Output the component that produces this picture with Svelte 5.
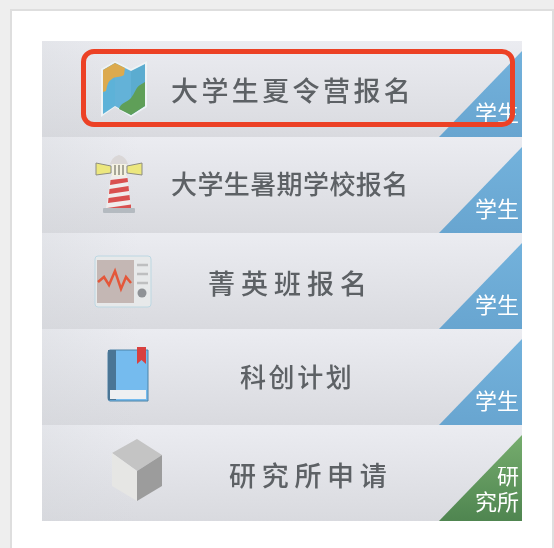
<script>
  const rows = [
    { id: 'map', label: '大学生夏令营报名', tag: ['学生'] },
    { id: 'tower', label: '大学生暑期学校报名', tag: ['学生'] },
    { id: 'monitor', label: '菁英班报名', tag: ['学生'] },
    { id: 'book', label: '科创计划', tag: ['学生'] },
    { id: 'cube', label: '研究所申请', tag: ['研', '究所'], green: true }
  ]
</script>

<div class="page">
  <div class="card">
    <div class="list">
      {#each rows as row}
        <div class="row {row.id}">
          <div class="icon">
            {#if row.id === 'map'}
              <svg width="50" height="58" viewBox="0 0 50 58">
                <path d="M2 9 L16 1 L32 9 L48 1 L48 47 L32 57 L16 47 L2 57Z" fill="#eef3f5" />
                <path d="M4 10 L16 3 L16 46 L4 54Z" fill="#5db2d8" />
                <path d="M16 3 L32 11 L32 55 L16 46Z" fill="#63b2d8" />
                <path d="M32 11 L46 4 L46 46 L32 55Z" fill="#5bacd0" />
                <path d="M4 10 L16 3 L26 8 L25 15 C20 18 16 16 13 19 C9 21 8 26 7 31 L4 32Z" fill="#dcaa4e" />
                <path d="M20 49 C22 42 28 43 32 38 C36 33 37 27 41 25 L46 22 L46 46 L32 55Z" fill="#5f9f58" />
              </svg>
            {:else if row.id === 'tower'}
              <svg width="48" height="60" viewBox="0 0 48 60">
                <path d="M1 8 L16 11 L16 18 L1 20Z" fill="#ece77e" stroke="#8d8d80" />
                <path d="M47 8 L32 11 L32 18 L47 20Z" fill="#ece77e" stroke="#8d8d80" />
                <path d="M15 9 C17 3 20 1 24 0 C28 1 31 3 33 9Z" fill="#dad7d7" />
                <rect x="17" y="9" width="14" height="12" fill="#f4f2e2" />
                <path d="M20 10 V20 M28 10 V20 M24 10 V20" stroke="#8f8f80" stroke-width="1.5" />
                <path d="M16 21 L32 21 L36 53 L11 53Z" fill="#f0ecec" />
                <path d="M15.500 25 L32.500 23 L33 27 L15 30Z M14.500 34 L33.500 31 L34 36 L14 39Z M13.500 43 L34.500 40 L35 45 L13 48Z M12 53 L36 49.500 L36 53Z" fill="#d9504f" />
                <rect x="8" y="53" width="32" height="5" rx="1" fill="#b4bac0" />
              </svg>
            {:else if row.id === 'monitor'}
              <svg width="58" height="53" viewBox="0 0 58 53">
                <rect x="1" y="1" width="56" height="51" rx="3" fill="#e7e9ea" stroke="#bcd7e2" />
                <rect x="3" y="5" width="37" height="43" fill="#c4b7b4" />
                <path d="M4 27 L10 22 L15 30 L21 16 L27 34 L32 22 L37 28" fill="none" stroke="#e4573a" stroke-width="2.5" />
                <path d="M43 10 H54 M43 19 H54 M43 28 H54" stroke="#bebfc0" stroke-width="2.5" />
                <circle cx="48" cy="38" r="4.500" fill="#8f9296" />
              </svg>
            {:else if row.id === 'book'}
              <svg width="42" height="56" viewBox="0 0 42 56">
                <path d="M3 4 H41 V55 H3 Q1 55 1 52 V7 Q1 4 3 4Z" fill="#75bbee" stroke="#4d83a8" />
                <rect x="1" y="4" width="8" height="50" fill="#4a7595" />
                <rect x="3" y="44" width="36" height="9" fill="#eef0f2" />
                <path d="M30 1 H39 V18 L34.500 14 L30 18Z" fill="#d8403f" />
              </svg>
            {:else}
              <svg width="52" height="64" viewBox="0 0 52 64">
                <path d="M26 1 L51 17 L26 33 L1 15Z" fill="#c4c4c4" />
                <path d="M1 15 L26 33 L26 63 L1 48Z" fill="#e6e6e4" />
                <path d="M51 17 L26 33 L26 63 L51 48Z" fill="#9c9c9c" />
              </svg>
            {/if}
          </div>
          <span class="label">{row.label}</span>
          <div class="corner" class:green={row.green}></div>
          <div class="tag">
            {#each row.tag as line}
              <div>{line}</div>
            {/each}
          </div>
        </div>
      {/each}
      <div class="highlight"></div>
    </div>
  </div>
</div>

<style>
  :global(body) {
    background: #eeeeee;
  }
  .page {
    height: 548px;
    overflow: hidden;
    padding: 9px 0 0 10px;
    box-sizing: border-box;
    background: #eeeeee;
  }
  .card {
    width: 544px;
    height: 560px;
    box-sizing: border-box;
    border: 2px solid #dedede;
    background: #ffffff;
    padding: 30px 0 0 30px;
  }
  .list {
    position: relative;
    width: 480px;
    display: flex;
    flex-direction: column;
  }
  .row {
    position: relative;
    height: 96px;
    display: flex;
    align-items: center;
    overflow: hidden;
    background:
      linear-gradient(to right, rgba(210, 213, 217, 0.3), rgba(230, 231, 236, 0) 20%),
      linear-gradient(to bottom, #ebecf1, #d9dadf);
  }
  .icon {
    display: flex;
    filter: blur(0.6px);
  }
  .label {
    font-family: "Noto Sans CJK SC", sans-serif;
    font-weight: 500;
    color: #5d6165;
    white-space: nowrap;
    filter: blur(0.7px);
  }
  .map .icon { margin-left: 57px; }
  .map .label { margin-left: 22px; font-size: 27px; letter-spacing: 3.4px; }
  .tower .icon { margin-left: 53px; }
  .tower .label { margin-left: 28px; margin-top: -5px; font-size: 26px; letter-spacing: 0.4px; }
  .monitor .icon { margin-left: 52px; margin-top: 1px; }
  .monitor .label { margin-left: 56px; margin-top: 2px; font-size: 27px; letter-spacing: 6px; }
  .book .icon { margin-left: 65px; margin-top: -6px; }
  .book .label { margin-left: 91px; margin-top: -3px; font-size: 26px; letter-spacing: 2.6px; }
  .cube .icon { margin-left: 69px; margin-top: -6px; }
  .cube .label { margin-left: 66px; margin-top: 2px; font-size: 27px; letter-spacing: 5.7px; }
  .corner {
    position: absolute;
    right: 0;
    bottom: 0;
    width: 83px;
    height: 86px;
    clip-path: polygon(100% 0, 100% 100%, 0 100%);
    background: linear-gradient(to bottom, #73b2dc, #68a5d0);
  }
  .corner.green {
    background: linear-gradient(to bottom, #76ad6e, #4f8550);
  }
  .tag {
    position: absolute;
    right: 3px;
    bottom: 13px;
    font-family: "Noto Sans CJK SC", sans-serif;
    font-size: 22px;
    line-height: 26px;
    color: #ffffff;
    text-align: right;
    filter: blur(0.3px);
  }
  .cube .tag {
    bottom: 8px;
  }
  .highlight {
    position: absolute;
    left: 39px;
    top: 8px;
    width: 434px;
    height: 78px;
    box-sizing: border-box;
    border: 5px solid #ec4125;
    border-radius: 13px;
  }
</style>
